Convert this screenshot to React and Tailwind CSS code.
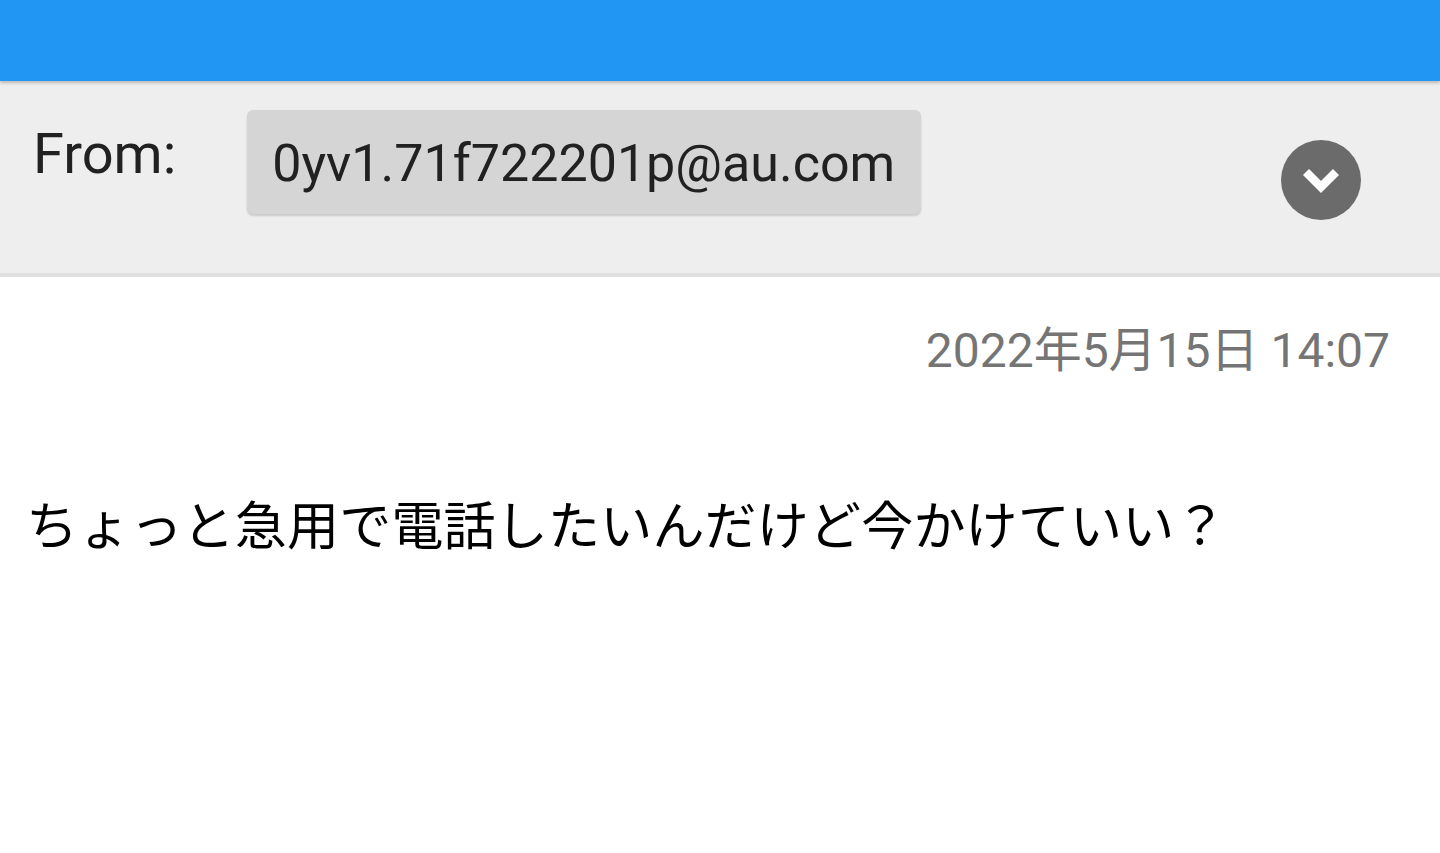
import React from 'react';

function Chevron() {
  return (
    <div className="ml-auto mr-[79px] mt-[59px] w-[80px] h-[80px] rounded-full bg-[#6b6b6b] flex items-center justify-center">
      <svg width="40" height="40" viewBox="0 0 40 40" fill="none">
        <path d="M5 12 L20 27 L35 12" stroke="#fff" strokeWidth="8.5" strokeLinecap="butt" strokeLinejoin="miter" />
      </svg>
    </div>
  );
}

export default function App() {
  return (
    <div className="w-[1440px] h-[853px] bg-white overflow-hidden font-['Roboto','Noto_Sans_CJK_JP',sans-serif]">
      <div className="relative z-10 h-[81px] bg-[#2196f3] shadow-[0_2px_3px_rgba(0,0,0,0.22)]" />

      <div className="h-[196px] bg-[#eeeeee] border-b-4 border-[#e0e0e0] flex items-start">
        <div className="ml-[33px] mt-[45px] text-[56px] leading-none text-[#212121]">From:</div>
        <div className="ml-[71px] mt-[29px] w-[674px] h-[104px] rounded-[6px] bg-[#d5d5d5] shadow-[0_2px_2px_rgba(0,0,0,0.15)] pl-[25px] pt-[28px] text-[52px] leading-none text-[#212121]">
          0yv1.71f722201p@au.com
        </div>
        <Chevron />
      </div>

      <div className="pt-[50px] pr-[50px] text-right text-[48px] leading-none text-[#757575]">
        2022年5月15日 14:07
      </div>

      <div className="pl-[26px] pt-[122px] text-[52px] leading-none text-black font-['Noto_Sans_CJK_JP',sans-serif] tracking-[0.2px]">
        ちょっと急用で電話したいんだけど今かけていい？
      </div>
    </div>
  );
}
